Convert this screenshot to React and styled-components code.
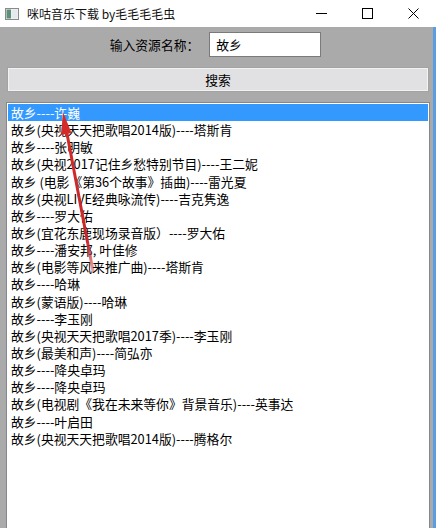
import styled, { createGlobalStyle } from "styled-components";

const songs = [
    "故乡----许巍",
    "故乡(央视天天把歌唱2014版)----塔斯肯",
    "故乡----张明敏",
    "故乡(央视2017记住乡愁特别节目)----王二妮",
    "故乡 (电影《第36个故事》插曲)----雷光夏",
    "故乡(央视LIVE经典咏流传)----吉克隽逸",
    "故乡----罗大佑",
    "故乡(宜花东鹿现场录音版）----罗大佑",
    "故乡----潘安邦, 叶佳修",
    "故乡(电影等风来推广曲)----塔斯肯",
    "故乡----哈琳",
    "故乡(蒙语版)----哈琳",
    "故乡----李玉刚",
    "故乡(央视天天把歌唱2017季)----李玉刚",
    "故乡(最美和声)----简弘亦",
    "故乡----降央卓玛",
    "故乡----降央卓玛",
    "故乡(电视剧《我在未来等你》背景音乐)----英事达",
    "故乡----叶启田",
    "故乡(央视天天把歌唱2014版)----腾格尔",
];

function AppIcon() {
    return (
        <IconBox width="14" height="12" viewBox="0 0 14 12">
            <rect x="0.5" y="0.5" width="13" height="11" fill="#f4f4f4" stroke="#8a8a8a" />
            <rect x="1.5" y="1.5" width="4.5" height="9" fill="#5f8f7a" />
            <rect x="6.5" y="1.5" width="6" height="9" fill="#e4e9ee" />
        </IconBox>
    );
}

function Arrow() {
    return (
        <ArrowLayer width="436" height="528" viewBox="0 0 436 528">
            <defs>
                <linearGradient id="fade" x1="63" y1="113" x2="93" y2="272" gradientUnits="userSpaceOnUse">
                    <stop offset="0" stopColor="#d42a2a" />
                    <stop offset="0.8" stopColor="#c8282b" />
                    <stop offset="1" stopColor="#c8282b" stopOpacity="0.4" />
                </linearGradient>
            </defs>
            <line x1="66.5" y1="131" x2="93" y2="271" stroke="url(#fade)" strokeWidth="3" strokeLinecap="round" />
            <polygon points="63,112 71.5,133 61,135" fill="#d42a2a" />
        </ArrowLayer>
    );
}

export default function App() {
    return (
        <Window>
            <GlobalStyle />
            <TitleBar>
                <AppIcon />
                <Title>咪咕音乐下载 by毛毛毛毛虫</Title>
                <Controls>
                    <Ctrl>
                        <svg width="11" height="11" viewBox="0 0 11 11">
                            <line x1="0" y1="5.5" x2="11" y2="5.5" stroke="#000" strokeWidth="1" />
                        </svg>
                    </Ctrl>
                    <Ctrl>
                        <svg width="11" height="11" viewBox="0 0 11 11">
                            <rect x="0.5" y="0.5" width="10" height="10" fill="none" stroke="#000" strokeWidth="1" />
                        </svg>
                    </Ctrl>
                    <Ctrl>
                        <svg width="11" height="11" viewBox="0 0 11 11">
                            <path d="M0.5 0.5 L10.5 10.5 M10.5 0.5 L0.5 10.5" stroke="#000" strokeWidth="1" />
                        </svg>
                    </Ctrl>
                </Controls>
            </TitleBar>
            <Body>
                <FormRow>
                    <Label>输入资源名称：</Label>
                    <TextBox defaultValue="故乡" />
                </FormRow>
                <SearchButton>搜索</SearchButton>
                <ListBox>
                    {songs.map((s, i) => (
                        <Item key={i} selected={i === 0}>{s}</Item>
                    ))}
                </ListBox>
            </Body>
            <Arrow />
        </Window>
    );
}

const GlobalStyle = createGlobalStyle`
    html, body {
        margin: 0;
        padding: 0;
        background: #fff;
    }
    body {
        font-family: "Noto Sans CJK SC", "Microsoft YaHei", sans-serif;
    }
`
const Window = styled.div`
    position: relative;
    display: flex;
    flex-flow: column nowrap;
    width: 436px;
    height: 528px;
    overflow: hidden;
`
const TitleBar = styled.div`
    display: flex;
    align-items: center;
    height: 27px;
    padding-left: 5px;
    background-color: #fff;
    flex-shrink: 0;
`
const IconBox = styled.svg`
    flex-shrink: 0;
    margin-top: 1px;
`
const Title = styled.div`
    margin-left: 8px;
    font-size: 12px;
    color: #111;
    margin-top: -1px;
    white-space: nowrap;
`
const Controls = styled.div`
    display: flex;
    margin-left: auto;
    height: 100%;
`
const Ctrl = styled.div`
    display: flex;
    justify-content: center;
    align-items: center;
    width: 46px;
    height: 100%;
`
const Body = styled.div`
    flex: 1;
    display: flex;
    flex-flow: column nowrap;
    padding: 5px 3px 0 6px;
    background-color: #abaaab;
    border-right: 3px solid #5b9de2;
    min-height: 0;
`
const FormRow = styled.div`
    display: flex;
    justify-content: center;
    align-items: center;
    gap: 10px;
    height: 25px;
    padding-right: 5px;
`
const Label = styled.span`
    font-size: 12.8px;
    line-height: 16px;
    color: #000;
`
const TextBox = styled.input`
    box-sizing: border-box;
    width: 112px;
    height: 25px;
    padding: 0 6px;
    border: 1px solid #7a7a7a;
    background: #fff;
    font-family: inherit;
    font-size: 12.8px;
    color: #000;
    outline: none;
`
const SearchButton = styled.div`
    display: flex;
    justify-content: center;
    align-items: center;
    height: 25px;
    box-sizing: border-box;
    margin: 10px 1px 0 1px;
    border: 1px solid #a3a3a3;
    box-shadow: inset 0 0 0 1px #f2f2f2;
    background-color: #e1e0e2;
    font-size: 12.8px;
    line-height: 16px;
    color: #000;
`
const ListBox = styled.div`
    flex: 1;
    margin-top: 10px;
    padding: 1px;
    background: #fff;
    border: 1px solid #828790;
    border-bottom: 0;
`
const Item = styled.div`
    height: 17.15px;
    line-height: 17.15px;
    overflow: hidden;
    padding-left: 3px;
    font-size: 12.8px;
    white-space: nowrap;
    color: ${props => props.selected ? "#fff" : "#000"};
    background-color: ${props => props.selected ? "#3399ff" : "transparent"};
`
const ArrowLayer = styled.svg`
    position: absolute;
    left: 0;
    top: 0;
    pointer-events: none;
`
